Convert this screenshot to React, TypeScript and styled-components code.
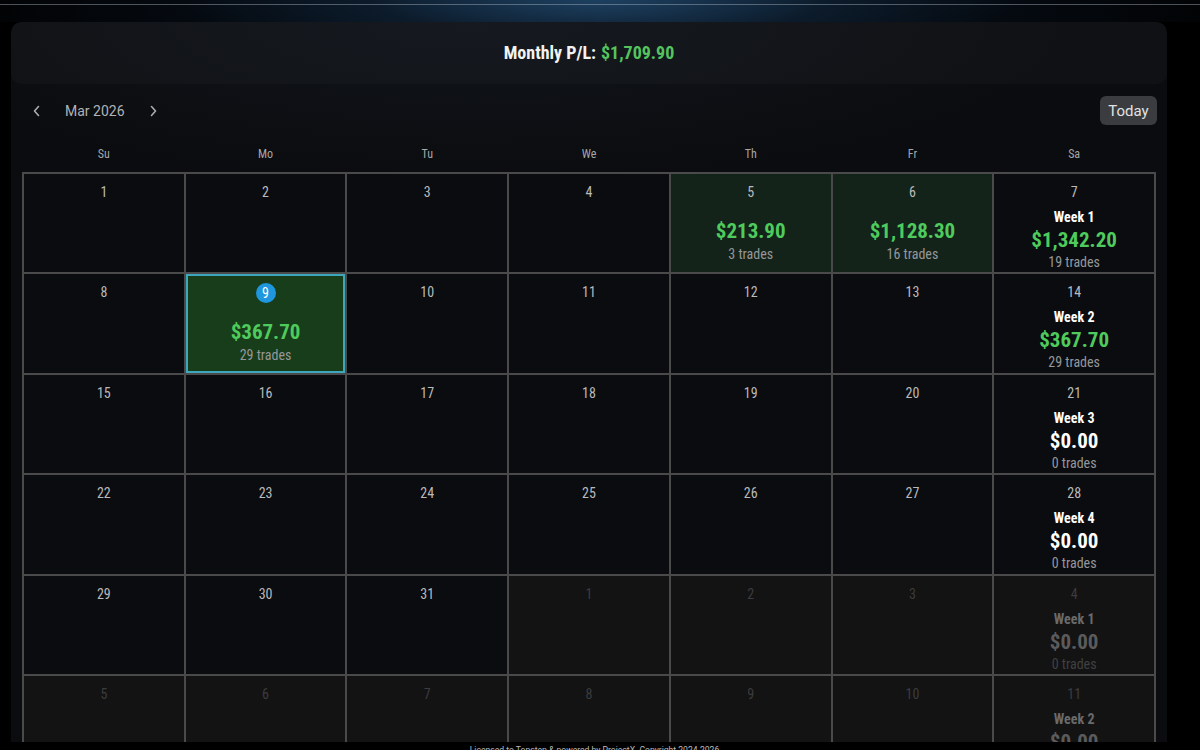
import React from "react";
import styled, { createGlobalStyle, css } from "styled-components";

const GlobalStyle = createGlobalStyle`
  html, body { margin: 0; padding: 0; background: #000; }
  body { font-family: Roboto, "Liberation Sans", sans-serif; overflow: hidden; }
  * { box-sizing: border-box; }
`;

const condensed = css`
  font-family: "Roboto Condensed", Roboto, sans-serif;
  font-stretch: 82%;
`;

const Page = styled.div`
  width: 1200px;
  height: 750px;
  overflow: hidden;
  background:
    radial-gradient(ellipse 420px 60px at 50% 0%, rgba(32, 70, 105, 0.85), rgba(20, 45, 70, 0.35) 55%, transparent 100%),
    linear-gradient(90deg, #020305 0%, #07101a 30%, #0c1c2c 50%, #07101a 70%, #020305 100%) top / 100% 22px no-repeat,
    #000;
  display: flex;
  flex-direction: column;
`;

const TopBar = styled.div`
  height: 5px;
  border-bottom: 1px solid rgba(170, 180, 190, 0.45);
  flex: none;
`;

const Card = styled.section`
  margin: 17px 0 0 11px;
  width: 1156px;
  height: 720px;
  flex: none;
  border-radius: 10px 10px 0 0;
  overflow: hidden;
  background:
    radial-gradient(ellipse 600px 160px at 40% 0%, rgba(40, 60, 80, 0.18), transparent 100%),
    #0b0c0f;
  display: flex;
  flex-direction: column;
`;

const Header = styled.header`
  height: 62px;
  flex: none;
  display: flex;
  align-items: center;
  justify-content: center;
  padding-bottom: 2px;
  background: rgba(255, 255, 255, 0.025);
  border-radius: 10px;
  ${condensed};
  font-weight: 700;
  font-size: 18px;
  color: #f2f2f2;
  gap: 5px;
`;

const Green = styled.span`
  color: #55c45f;
`;

const Body = styled.div`
  padding: 0 11px 0 11px;
  display: flex;
  flex-direction: column;
`;

const NavRow = styled.div`
  height: 54px;
  display: flex;
  align-items: center;
  justify-content: space-between;
`;

const NavLeft = styled.div`
  display: flex;
  align-items: center;
`;

const Arrow = styled.button`
  width: 30px;
  height: 28px;
  display: flex;
  align-items: center;
  justify-content: center;
  background: none;
  border: none;
  padding: 0;
  color: #a9abae;
  cursor: pointer;
`;

const MonthLabel = styled.span`
  font-family: Roboto, sans-serif;
  font-size: 14px;
  color: #b0b2b5;
  padding: 0 13px 0 13px;
`;

const TodayButton = styled.button`
  height: 29px;
  width: 57px;
  margin-top: -1px;
  border: none;
  border-radius: 6px;
  background: #3b3c3f;
  color: #e2e2e2;
  font-family: Roboto, sans-serif;
  font-size: 15px;
  padding: 0;
  margin-right: -1px;
`;

const WeekHeader = styled.div`
  display: grid;
  grid-template-columns: repeat(7, 1fr);
  padding: 0 2px;
  column-gap: 2px;
  height: 34px;
  align-items: center;
`;

const DayName = styled.div`
  text-align: center;
  ${condensed};
  font-size: 12px;
  color: #a6a7a9;
  padding-bottom: 2px;
`;

const Grid = styled.div`
  display: grid;
  grid-template-columns: repeat(7, 1fr);
  grid-auto-rows: 98.4px;
  gap: 2px;
  padding: 2px;
  background: #4a4a4b;
`;

type Variant = "normal" | "profit" | "today" | "outside";

const Cell = styled.div<{ $variant: Variant }>`
  display: flex;
  flex-direction: column;
  align-items: center;
  padding-top: 10px;
  background: #0b0c0f;
  ${condensed};
  ${(p) =>
    p.$variant === "profit" &&
    css`
      background: #13231a;
    `}
  ${(p) =>
    p.$variant === "today" &&
    css`
      background: #183d1b;
      box-shadow: inset 0 0 0 2px #3ea7bd;
    `}
  ${(p) =>
    p.$variant === "outside" &&
    css`
      background: #131314;
    `}
`;

const DayNum = styled.div<{ $dim?: boolean }>`
  height: 16px;
  line-height: 16px;
  font-size: 14px;
  color: ${(p) => (p.$dim ? "#3c3c3d" : "#b9babb")};
`;

const TodayBadge = styled.div`
  width: 20px;
  height: 20px;
  margin-top: -1px;
  margin-bottom: -2px;
  border-radius: 50%;
  background: #1e97de;
  color: #fff;
  font-size: 14px;
  display: flex;
  align-items: center;
  justify-content: center;
`;

const WeekLabel = styled.div<{ $dim?: boolean }>`
  margin-top: 9px;
  height: 17px;
  line-height: 17px;
  font-size: 14px;
  font-weight: 700;
  color: ${(p) => (p.$dim ? "#6a6a6b" : "#ffffff")};
`;

const Amount = styled.div<{ $tone: "green" | "white" | "dim"; $first?: boolean }>`
  margin-top: ${(p) => (p.$first ? "19px" : "2px")};
  height: 25px;
  line-height: 25px;
  font-size: 21px;
  font-weight: 700;
  color: ${(p) => (p.$tone === "green" ? "#4fcb5d" : p.$tone === "white" ? "#ffffff" : "#5b5b5c")};
`;

const Trades = styled.div<{ $dim?: boolean; $gap: number }>`
  margin-top: ${(p) => p.$gap}px;
  height: 17px;
  line-height: 17px;
  font-size: 14px;
  color: ${(p) => (p.$dim ? "#404041" : "#96979a")};
`;

const Footer = styled.footer`
  margin-top: 2px;
  text-align: center;
  font-size: 8.6px;
  color: #b8b8b8;
  line-height: 12px;
  padding-right: 11px;
`;

type Day = {
  day: number;
  outside?: boolean;
  pl?: string;
  trades?: number;
  today?: boolean;
  week?: { n: number; pl: string; trades: number; tone: "green" | "white" | "dim" };
};

const rows: Day[][] = [
  [
    { day: 1 },
    { day: 2 },
    { day: 3 },
    { day: 4 },
    { day: 5, pl: "$213.90", trades: 3 },
    { day: 6, pl: "$1,128.30", trades: 16 },
    { day: 7, week: { n: 1, pl: "$1,342.20", trades: 19, tone: "green" } },
  ],
  [
    { day: 8 },
    { day: 9, pl: "$367.70", trades: 29, today: true },
    { day: 10 },
    { day: 11 },
    { day: 12 },
    { day: 13 },
    { day: 14, week: { n: 2, pl: "$367.70", trades: 29, tone: "green" } },
  ],
  [
    { day: 15 },
    { day: 16 },
    { day: 17 },
    { day: 18 },
    { day: 19 },
    { day: 20 },
    { day: 21, week: { n: 3, pl: "$0.00", trades: 0, tone: "white" } },
  ],
  [
    { day: 22 },
    { day: 23 },
    { day: 24 },
    { day: 25 },
    { day: 26 },
    { day: 27 },
    { day: 28, week: { n: 4, pl: "$0.00", trades: 0, tone: "white" } },
  ],
  [
    { day: 29 },
    { day: 30 },
    { day: 31 },
    { day: 1, outside: true },
    { day: 2, outside: true },
    { day: 3, outside: true },
    { day: 4, outside: true, week: { n: 1, pl: "$0.00", trades: 0, tone: "dim" } },
  ],
  [
    { day: 5, outside: true },
    { day: 6, outside: true },
    { day: 7, outside: true },
    { day: 8, outside: true },
    { day: 9, outside: true },
    { day: 10, outside: true },
    { day: 11, outside: true, week: { n: 2, pl: "$0.00", trades: 0, tone: "dim" } },
  ],
];

const dayNames = ["Su", "Mo", "Tu", "We", "Th", "Fr", "Sa"];

const Chevron = ({ dir }: { dir: "left" | "right" }) => (
  <svg width="10" height="12" viewBox="0 0 10 12" fill="none">
    <path
      d={dir === "left" ? "M6.5 1.5 L2.5 6 L6.5 10.5" : "M3.5 1.5 L7.5 6 L3.5 10.5"}
      stroke="currentColor"
      strokeWidth="1.6"
      strokeLinecap="round"
      strokeLinejoin="round"
    />
  </svg>
);

const DayCell = ({ d }: { d: Day }) => {
  const variant: Variant = d.outside ? "outside" : d.today ? "today" : d.pl ? "profit" : "normal";
  return (
    <Cell $variant={variant}>
      {d.today ? <TodayBadge>{d.day}</TodayBadge> : <DayNum $dim={d.outside}>{d.day}</DayNum>}
      {d.pl && (
        <>
          <Amount $tone="green" $first>
            {d.pl}
          </Amount>
          <Trades $gap={2}>{d.trades} trades</Trades>
        </>
      )}
      {d.week && (
        <>
          <WeekLabel $dim={d.week.tone === "dim"}>Week {d.week.n}</WeekLabel>
          <Amount $tone={d.week.tone}>{d.week.pl}</Amount>
          <Trades $gap={1} $dim={d.week.tone === "dim"}>
            {d.week.trades} trades
          </Trades>
        </>
      )}
    </Cell>
  );
};

export default function App() {
  return (
    <>
      <GlobalStyle />
      <Page>
        <TopBar />
        <Card>
          <Header>
            Monthly P/L: <Green>$1,709.90</Green>
          </Header>
          <Body>
            <NavRow>
              <NavLeft>
                <Arrow aria-label="Previous month">
                  <Chevron dir="left" />
                </Arrow>
                <MonthLabel>Mar 2026</MonthLabel>
                <Arrow aria-label="Next month">
                  <Chevron dir="right" />
                </Arrow>
              </NavLeft>
              <TodayButton>Today</TodayButton>
            </NavRow>
            <WeekHeader>
              {dayNames.map((n) => (
                <DayName key={n}>{n}</DayName>
              ))}
            </WeekHeader>
            <Grid>
              {rows.flat().map((d, i) => (
                <DayCell key={i} d={d} />
              ))}
            </Grid>
          </Body>
        </Card>
        <Footer>Licensed to Topstep &amp; powered by ProjectX. Copyright 2024-2026</Footer>
      </Page>
    </>
  );
}
